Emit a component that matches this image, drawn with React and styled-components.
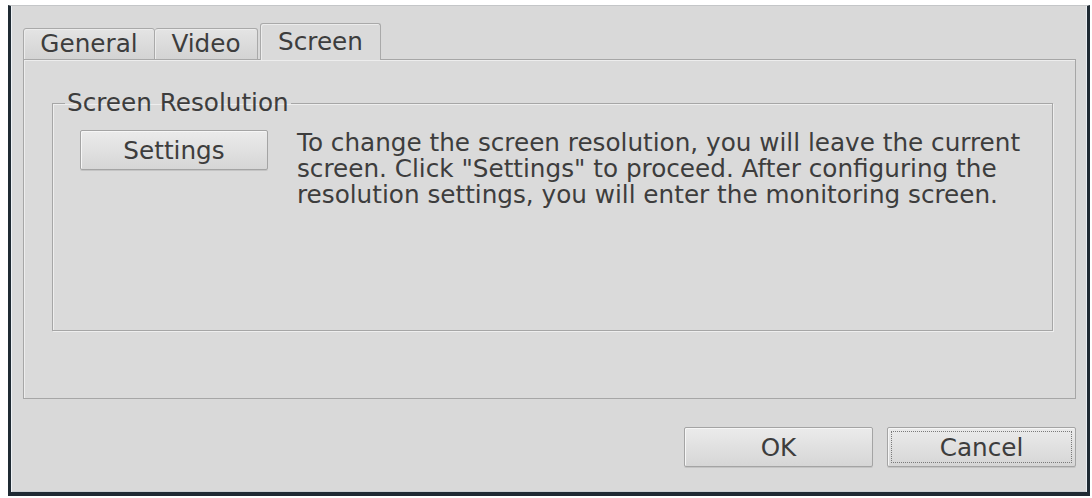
import React from "react";
import styled, { createGlobalStyle } from "styled-components";

const GlobalStyle = createGlobalStyle`
  html, body { margin: 0; padding: 0; background: #ffffff; }
  body { font-family: "DejaVu Sans", "Liberation Sans", sans-serif; }
`;

const Window = styled.div`
  box-sizing: border-box;
  margin: 5px 0 0 8px;
  width: 1082px;
  height: 491px;
  border-top: 1px solid #c4c6c8;
  border-left: 3px solid #1f2a33;
  border-right: 3px solid #1f2a33;
  border-bottom: 4px solid #1f2a33;
  background: #d9d9d9;
  box-shadow: inset 1px 0 0 #eef2f6, inset -1px 0 0 #e8edf2, inset 0 -1px 0 #c9ced2;
  display: flex;
  flex-direction: column;
  padding: 17px 11px 0 12px;
  font-family: "DejaVu Sans", "Liberation Sans", sans-serif;
  font-size: 24.7px;
  color: #3d3d3d;
`;

const TabBar = styled.div`
  display: flex;
  align-items: flex-end;
  height: 37px;
  margin-bottom: -1px;
  position: relative;
  z-index: 1;
`;

const Tab = styled.div`
  box-sizing: border-box;
  width: ${(p) => p.$w}px;
  height: ${(p) => (p.$active ? 37 : 32)}px;
  margin-left: ${(p) => (p.$active ? 2 : 0)}px;
  border: 1px solid #a9a9a9;
  border-bottom: ${(p) => (p.$active ? "none" : "1px solid #a9a9a9")};
  border-left: ${(p) => (p.$first || p.$active ? "1px solid #a9a9a9" : "none")};
  border-radius: 3px 3px 0 0;
  background: ${(p) =>
    p.$active ? "#dadada" : "linear-gradient(#e4e4e4, #d3d3d3)"};
  box-shadow: inset 1px 1px 0 #ececec;
  text-align: center;
  line-height: 30px;
  padding-top: ${(p) => (p.$active ? 3 : 0)}px;
`;

const Panel = styled.div`
  box-sizing: border-box;
  height: 340px;
  border: 1px solid #a6a6a6;
  box-shadow: inset 1px 1px 0 #ededed;
  background: #dadada;
`;

const Group = styled.fieldset`
  box-sizing: border-box;
  margin: 30px 0 0 28px;
  width: 1001px;
  height: 241px;
  border: 1px solid #a6a6a6;
  box-shadow: 1px 1px 0 #eeeeee, inset 1px 1px 0 #eeeeee;
  padding: 14px 20px 0 27px;
  display: flex;
  align-items: flex-start;
`;

const Legend = styled.legend`
  margin-left: -15px;
  padding: 0 2px;
  line-height: 26px;
`;

const Button = styled.button`
  box-sizing: border-box;
  flex: none;
  width: ${(p) => p.$w}px;
  height: 40px;
  border: 1px solid #a4a4a4;
  border-radius: 2px;
  background: linear-gradient(#ebebeb, #d6d6d6);
  box-shadow: inset 1px 1px 0 #f6f6f6, 0 1px 0 #c4c4c4;
  font-family: inherit;
  font-size: inherit;
  color: inherit;
  padding: 0;
  ${(p) => (p.$focused ? "outline: 1px dotted #7a7a7a; outline-offset: -5px;" : "")}
`;

const Description = styled.p`
  margin: 0 0 0 29px;
  line-height: 26px;
`;

const Footer = styled.div`
  display: flex;
  justify-content: flex-end;
  gap: 14px;
  margin-top: 28px;
`;

export default function App() {
  return (
    <>
      <GlobalStyle />
      <Window>
        <TabBar>
          <Tab $w={132} $first>General</Tab>
          <Tab $w={103}>Video</Tab>
          <Tab $w={121} $active>Screen</Tab>
        </TabBar>
        <Panel>
          <Group>
            <Legend>Screen Resolution</Legend>
            <Button $w={188}>Settings</Button>
            <Description>
              To change the screen resolution, you will leave the current
              <br />
              screen. Click "Settings" to proceed. After configuring the
              <br />
              resolution settings, you will enter the monitoring screen.
            </Description>
          </Group>
        </Panel>
        <Footer>
          <Button $w={189}>OK</Button>
          <Button $w={189} $focused>Cancel</Button>
        </Footer>
      </Window>
    </>
  );
}
